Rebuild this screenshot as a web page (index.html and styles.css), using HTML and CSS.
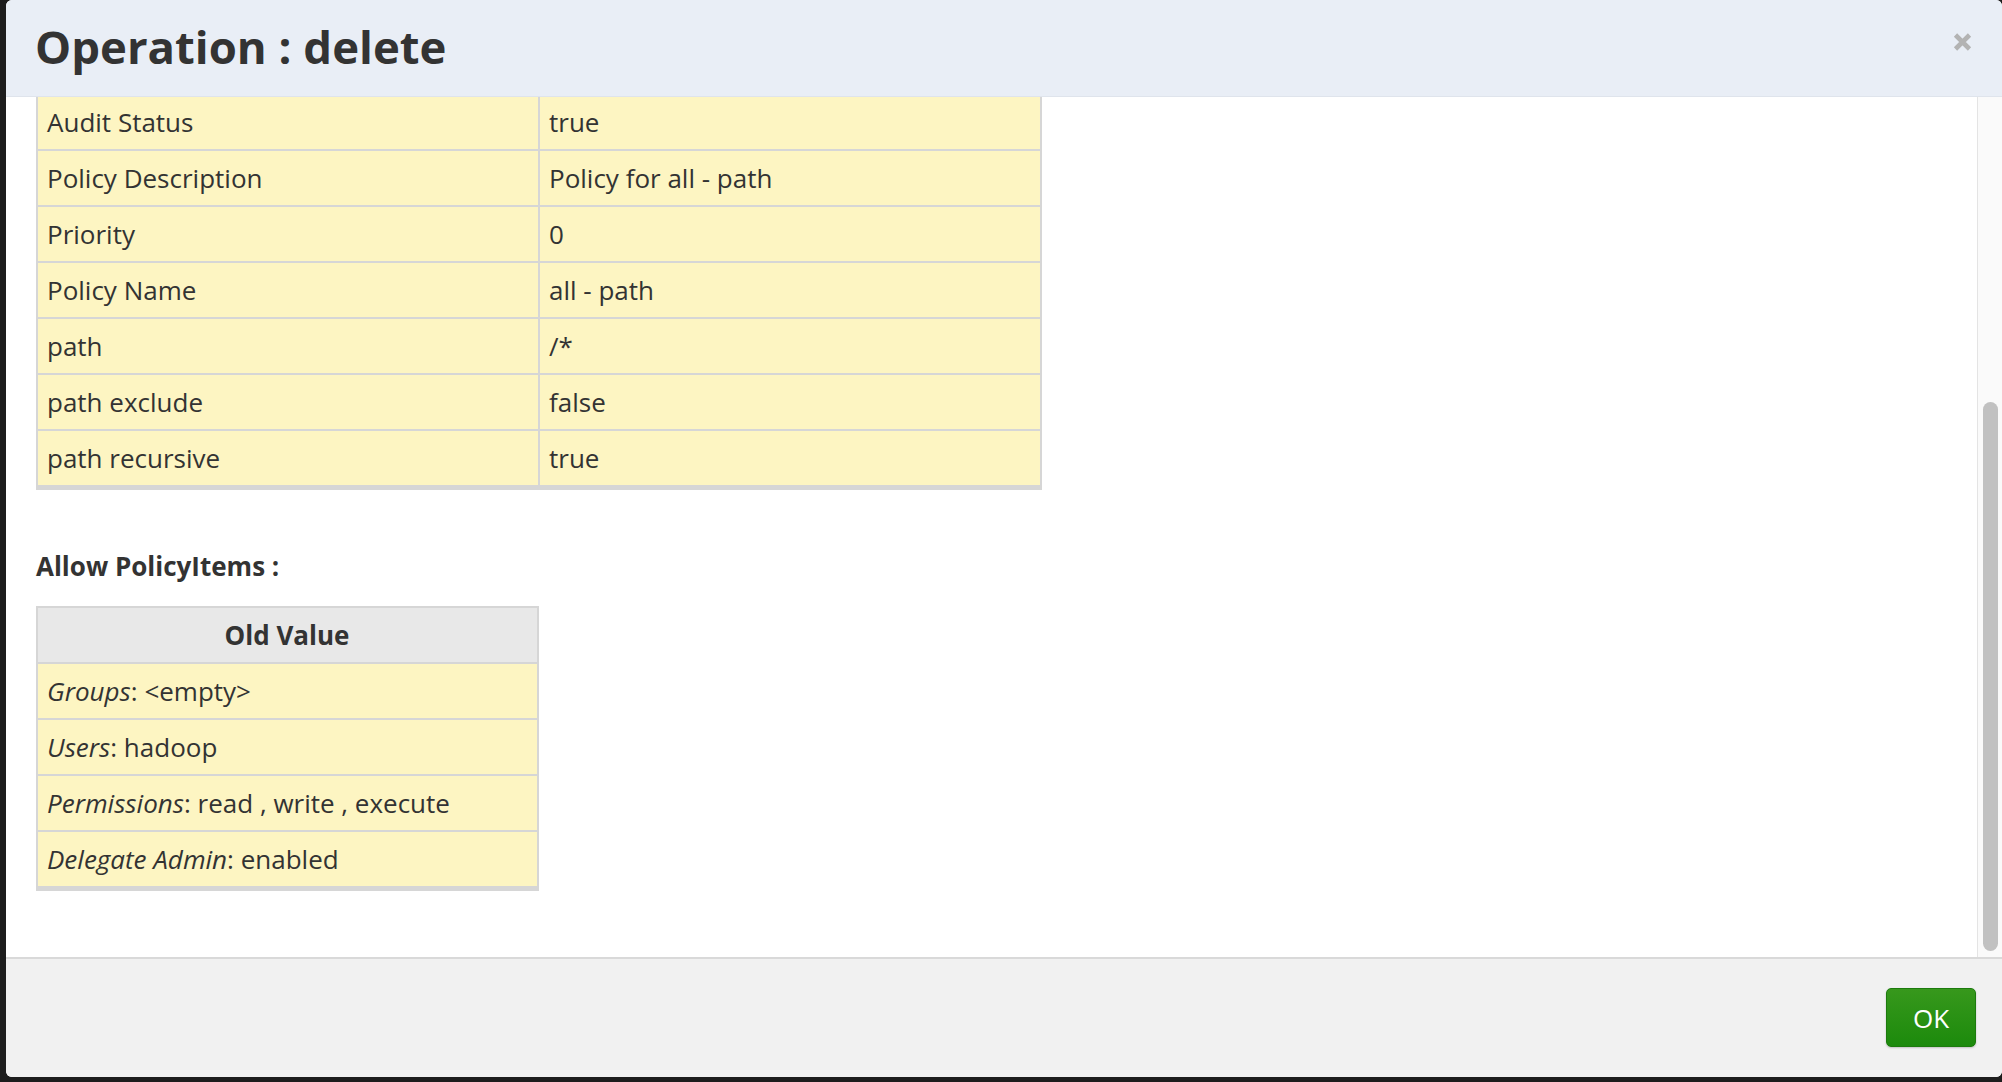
FILE: index.html
```html
<!DOCTYPE html>
<html lang="en">
<head>
<meta charset="utf-8">
<title>Operation : delete</title>
<link rel="stylesheet" href="styles.css">
</head>
<body>
<div class="modal">
  <div class="modal-header">
    <h3 class="modal-title">Operation : delete</h3>
    <button class="close" aria-label="Close">
      <svg width="19" height="18" viewBox="0 0 19 18"><path d="M2.5 2 L16.5 16 M16.5 2 L2.5 16" stroke="#b3b3b3" stroke-width="4.6" fill="none"/></svg>
    </button>
  </div>
  <div class="modal-body">
    <div class="scroll-area">
      <div class="body-inner">
        <table class="grid policy-table">
          <tbody>
            <tr><td>Audit Status</td><td>true</td></tr>
            <tr><td>Policy Description</td><td>Policy for all - path</td></tr>
            <tr><td>Priority</td><td>0</td></tr>
            <tr><td>Policy Name</td><td>all - path</td></tr>
            <tr><td>path</td><td>/*</td></tr>
            <tr><td>path exclude</td><td>false</td></tr>
            <tr><td>path recursive</td><td>true</td></tr>
          </tbody>
        </table>

        <h4 class="section-title">Allow PolicyItems :</h4>
        <table class="grid items-table">
          <thead>
            <tr><th>Old Value</th></tr>
          </thead>
          <tbody>
            <tr><td><em>Groups</em>: &lt;empty&gt;</td></tr>
            <tr><td><em>Users</em>: hadoop</td></tr>
            <tr><td><em>Permissions</em>: read , write , execute</td></tr>
            <tr><td><em>Delegate Admin</em>: enabled</td></tr>
          </tbody>
        </table>
      </div>
    </div>
    <div class="scrollbar"><div class="thumb"></div></div>
  </div>
  <div class="modal-footer">
    <button class="btn-ok">OK</button>
  </div>
</div>
</body>
</html>
```

FILE: styles.css
```css
html, body {
  margin: 0;
  height: 100%;
}

body {
  background: #1d1d1d;
  font-family: "Open Sans", "Liberation Sans", sans-serif;
  color: #333;
  overflow: hidden;
}

.modal {
  margin-left: 6px;
  height: 1077px;
  background: #fff;
  border-radius: 6px;
  display: flex;
  flex-direction: column;
  overflow: hidden;
}

/* header */
.modal-header {
  flex: none;
  height: 97px;
  box-sizing: border-box;
  background: #e9eef6;
  border-bottom: 1px solid #dfe4ec;
  display: flex;
  align-items: flex-start;
  padding: 22px 30px 0 29px;
}

.modal-title {
  margin: 0;
  font-size: 45.5px;
  line-height: 49px;
  font-weight: 700;
  color: #333;
}

.close {
  margin-left: auto;
  margin-top: 11px;
  padding: 0;
  border: 0;
  background: none;
  width: 19px;
  height: 18px;
  display: block;
}

.close svg {
  display: block;
}

/* body */
.modal-body {
  flex: 1;
  min-height: 0;
  display: flex;
  background: #fff;
}

.scroll-area {
  flex: 1;
  min-width: 0;
  overflow: hidden;
  display: flex;
  flex-direction: column-reverse;
}

.body-inner {
  flex: none;
  padding: 0 0 69px 30px;
}

.scrollbar {
  flex: none;
  width: 25px;
  box-sizing: border-box;
  background: #fafafa;
  border-left: 1px solid #e4e4e4;
  display: flex;
  flex-direction: column;
  justify-content: flex-end;
  padding: 0 4px 6px 5px;
}

.thumb {
  height: 549px;
  background: #c1c1c1;
  border-radius: 8px;
}

.section-title {
  margin: 61px 0 22px;
  font-size: 26px;
  line-height: 36px;
  font-weight: 700;
  color: #333;
}

.grid {
  border-collapse: collapse;
  table-layout: fixed;
  box-shadow: 0 3px 0 #d6d6d6;
}

.grid th,
.grid td {
  border: 2px solid #d6d6d6;
  padding: 8px 10px 8px 9px;
  font-size: 26px;
  line-height: 38px;
  text-align: left;
  font-weight: 400;
  color: #333;
  white-space: nowrap;
}

.grid td {
  background: #fdf5c2;
}

.grid th {
  background: #e8e8e8;
  font-weight: 700;
  text-align: center;
}

.grid em {
  font-style: italic;
}

.policy-table {
  width: 1006px;
}

.items-table {
  width: 503px;
}

/* footer */
.modal-footer {
  flex: none;
  height: 120px;
  box-sizing: border-box;
  border-top: 2px solid #d9d9d9;
  background: #f1f1f1;
  display: flex;
  justify-content: flex-end;
  align-items: flex-start;
  padding: 29px 26px 0 0;
}

.btn-ok {
  width: 90px;
  height: 59px;
  box-sizing: border-box;
  border: 1px solid #1c7b0d;
  border-radius: 5px;
  background: linear-gradient(#37981c, #1c8a0c);
  color: #fff;
  font-family: "Open Sans", "Liberation Sans", sans-serif;
  font-size: 26px;
  line-height: 1;
  padding: 0;
  box-shadow: 0 1px 2px rgba(0, 0, 0, 0.2);
}
```
